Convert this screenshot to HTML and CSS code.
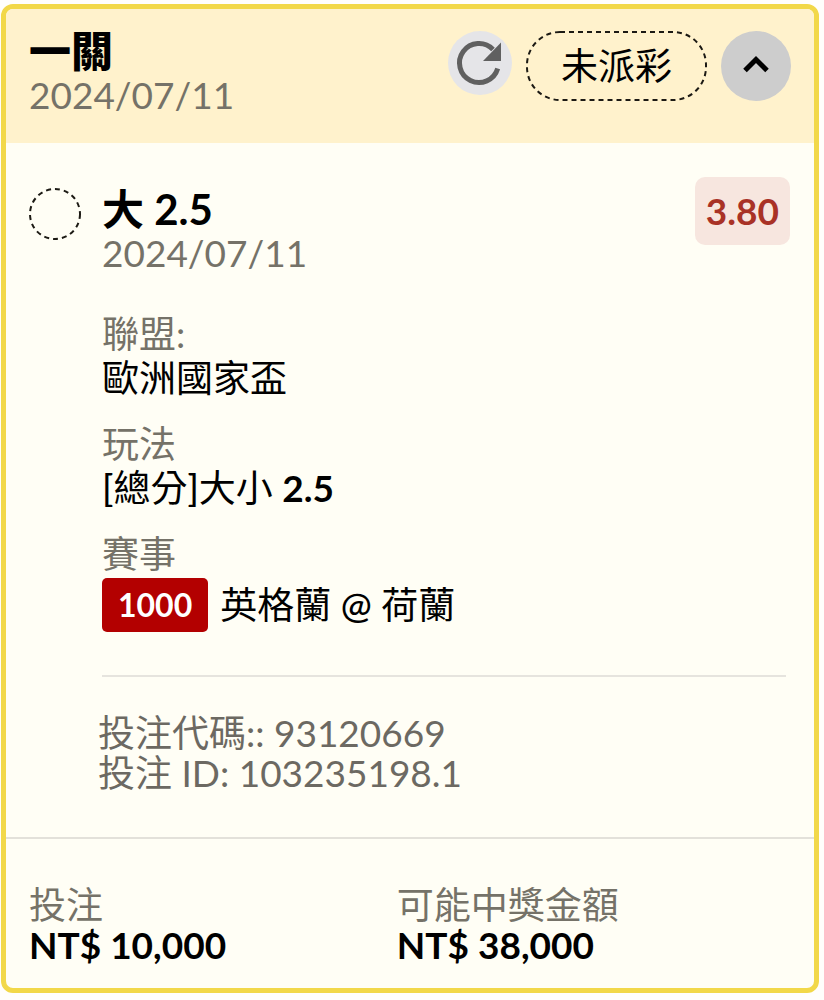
FILE: index.html
```html
<!DOCTYPE html>
<html lang="zh-Hant">
<head>
  <meta charset="UTF-8" />
  <meta name="viewport" content="width=device-width, initial-scale=1.0"/>
  <title>投注</title>
  <link rel="stylesheet" href="styles.css">
</head>
<body>
  <article class="ticket">
    <header class="ticket-header">
      <div class="heading">
        <h1 class="title black">一關</h1>
        <time class="muted" datetime="2024-07-11">2024/07/11</time>
      </div>
      <div class="actions">
        <button class="refresh" type="button" aria-label="Refresh">
          <svg viewBox="0 0 64 64" width="64" height="64" aria-hidden="true">
            <path d="M45 18.400A19.500 19.500 0 1 0 49.700 37.500" fill="none" stroke="#606060" stroke-width="5"/>
            <path d="M53 11.500V30H35Z" fill="#606060"/>
          </svg>
        </button>
        <span class="status">
          <svg class="outline" aria-hidden="true"><rect x="1" y="1" rx="33" ry="33"/></svg>
          未派彩
        </span>
        <button class="toggle" type="button" aria-label="Collapse" aria-expanded="true">
          <svg viewBox="0 0 70 70" width="70" height="70" aria-hidden="true">
            <path d="M24 39.500L35 28.500L46 39.500" fill="none" stroke="#000" stroke-width="5"/>
          </svg>
        </button>
      </div>
    </header>

    <section class="bet">
      <svg class="ring" viewBox="0 0 54 54" width="54" height="54" aria-hidden="true">
        <circle cx="27" cy="27" r="25"/>
      </svg>
      <div class="bet-main">
        <div class="bet-top">
          <div class="heading">
            <h2 class="title">大 2.5</h2>
            <time class="muted" datetime="2024-07-11">2024/07/11</time>
          </div>
          <span class="odds">3.80</span>
        </div>

        <dl class="details">
          <div class="detail">
            <dt>聯盟:</dt>
            <dd>歐洲國家盃</dd>
          </div>
          <div class="detail">
            <dt>玩法</dt>
            <dd><span class="medium">[</span>總分<span class="medium">]</span>大小 <b>2.5</b></dd>
          </div>
          <div class="detail">
            <dt>賽事</dt>
            <dd class="match"><span class="code">1000</span><span>英格蘭 <span class="medium">@</span> 荷蘭</span></dd>
          </div>
        </dl>

        <div class="reference">
          <p>投注代碼:: 93120669</p>
          <p>投注 ID: 103235198.1</p>
        </div>
      </div>
    </section>

    <footer class="totals">
      <div>
        <p class="muted">投注</p>
        <p class="amount">NT$ 10,000</p>
      </div>
      <div>
        <p class="muted">可能中獎金額</p>
        <p class="amount">NT$ 38,000</p>
      </div>
    </footer>
  </article>
</body>
</html>
```
FILE: styles.css
```css
* {
  box-sizing: border-box;
}
body {
  margin: 4px 5px 6px 1px;
  background: #fffefc;
  color: #000;
  font-family: Lato, "Noto Sans CJK TC", sans-serif;
  font-size: 37px;
  line-height: 40px;
}
h1, h2, p, dl, dd {
  margin: 0;
}
button {
  padding: 0;
  border: none;
  border-radius: 50%;
  cursor: pointer;
}
svg {
  display: block;
}
.ticket {
  border: 5px solid #f2d849;
  border-radius: 12px;
  background: #fffef5;
  overflow: hidden;
}
.ticket-header {
  display: flex;
  justify-content: space-between;
  align-items: flex-start;
  padding: 20px 23px 24px;
  background: #fff2cc;
}
.heading {
  display: flex;
  flex-direction: column;
}
.title {
  font-size: 42px;
  line-height: 44px;
  font-weight: 700;
}
.title.black {
  font-weight: 900;
}
.muted {
  color: #757268;
  line-height: 44px;
}
.actions {
  display: flex;
  gap: 14px;
  padding: 2px 0 18px;
}
.refresh {
  width: 64px;
  height: 64px;
  background: #e5e5e8;
}
.status {
  position: relative;
  padding: 0 35px;
  line-height: 70px;
}
.outline {
  position: absolute;
  inset: 0;
  width: 100%;
  height: 100%;
}
.outline rect {
  width: calc(100% - 2px);
  height: calc(100% - 2px);
}
.outline rect,
.ring circle {
  fill: none;
  stroke: #1c1a14;
  stroke-width: 2;
  stroke-dasharray: 5 4;
}
.toggle {
  width: 70px;
  height: 70px;
  background: #cdcdcd;
}
.bet {
  display: flex;
  gap: 20px;
  padding: 34px 24px 44px 22px;
}
.ring {
  flex: none;
  margin-top: 10px;
}
.bet-main {
  flex: 1;
}
.bet-top {
  display: flex;
  justify-content: space-between;
  align-items: flex-start;
}
.bet-top .heading {
  padding-top: 10px;
}
.odds {
  padding: 0 11px;
  border-radius: 10px;
  background: #f7e6df;
  color: #a93226;
  line-height: 68px;
  font-weight: 700;
}
.details {
  display: flex;
  flex-direction: column;
  gap: 22px;
  margin-right: 4px;
  padding: 37px 0 43px;
  border-bottom: 2px solid #e6e4de;
}
.detail {
  line-height: 44px;
}
dt {
  color: #757268;
}
.medium {
  font-weight: 500;
}
b {
  font-weight: 700;
}
.match {
  display: flex;
  gap: 12px;
  margin-top: 2px;
  line-height: 54px;
}
.code {
  padding: 0 16px;
  border-radius: 5px;
  background: #b30000;
  color: #fff;
  font-size: 32px;
  font-weight: 700;
}
.reference {
  margin-left: -4px;
  padding-top: 36px;
  color: #6c6962;
}
.totals {
  display: grid;
  grid-template-columns: 29fr 31fr;
  padding: 46px 24px 23px 23px;
  border-top: 2px solid #e3e1da;
}
.totals .muted {
  line-height: 40px;
}
.amount {
  font-weight: 700;
}
```
